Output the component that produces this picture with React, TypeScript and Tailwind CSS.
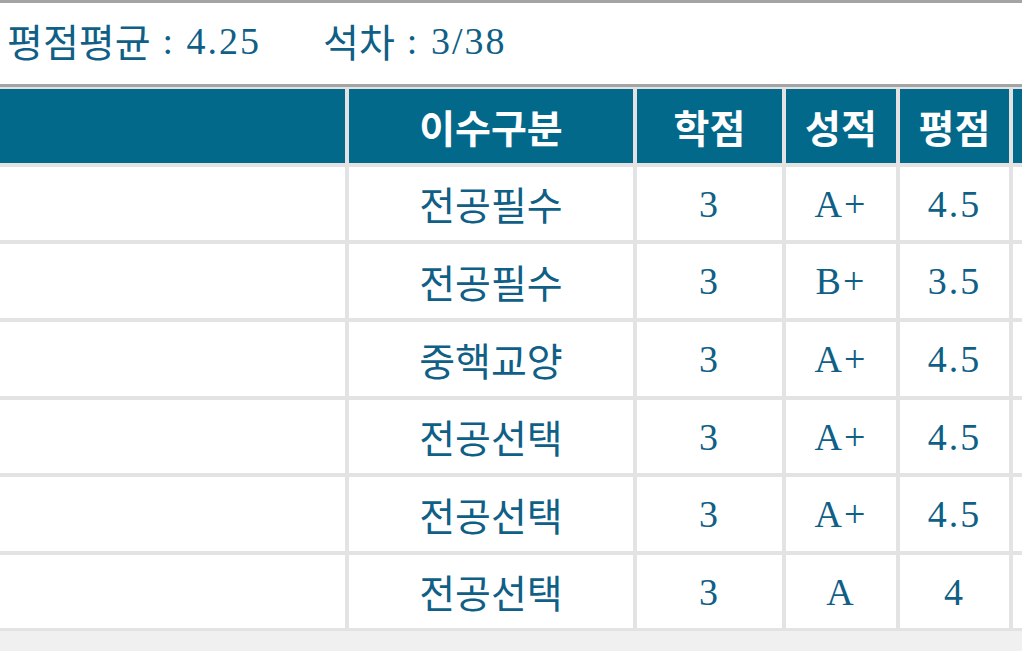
import React from "react";

const rows = [
  { type: "전공필수", credit: "3", grade: "A+", point: "4.5", h: "h-[73px]" },
  { type: "전공필수", credit: "3", grade: "B+", point: "3.5", h: "h-[74px]" },
  { type: "중핵교양", credit: "3", grade: "A+", point: "4.5", h: "h-[74px]" },
  { type: "전공선택", credit: "3", grade: "A+", point: "4.5", h: "h-[73px]" },
  { type: "전공선택", credit: "3", grade: "A+", point: "4.5", h: "h-[74px]" },
  { type: "전공선택", credit: "3", grade: "A", point: "4", h: "h-[73px]" },
];

const font = "font-['Liberation_Serif','Noto_Sans_CJK_KR',serif]";
const kr = "font-['Noto_Sans_CJK_KR',sans-serif] text-[39px]";
const num = "text-[38px] tracking-[2px]";

export default function App() {
  return (
    <div className={`w-[1022px] h-[651px] overflow-hidden bg-[#f0f0f0] ${font}`}>
      <div className="h-[87px] bg-white border-t-[3px] border-b-[3px] border-[#a4a4a4] flex items-center pl-[7px] pb-[6px] text-[#0f5f86] leading-none">
        <span className={kr}>평점평균</span>
        <span className={`${num} ml-[12px]`}>: 4.25</span>
        <span className={`${kr} ml-[62px]`}>석차</span>
        <span className={`${num} ml-[12px]`}>: 3/38</span>
      </div>
      <div className="bg-[#e3e3e3] pt-[2px] pb-[3px]">
        <div className="grid grid-cols-[345px_284px_145px_110px_109px_1fr] gap-[4px] leading-none">
          <div className="h-[74px] bg-[#03698b]" />
          {["이수구분", "학점", "성적", "평점"].map((t) => (
            <div
              key={t}
              className={`h-[74px] bg-[#03698b] flex items-center justify-center text-white font-bold ${kr}`}
            >
              {t}
            </div>
          ))}
          <div className="h-[74px] bg-[#03698b]" />
          {rows.map((r, i) => (
            <React.Fragment key={i}>
              <div className={`${r.h} bg-white`} />
              <div className={`${r.h} bg-white flex items-center justify-center text-[#0f5f86] ${kr}`}>
                {r.type}
              </div>
              <div className={`${r.h} bg-white flex items-center justify-center text-[#0f5f86] ${num}`}>
                {r.credit}
              </div>
              <div className={`${r.h} bg-white flex items-center justify-center text-[#0f5f86] ${num}`}>
                {r.grade}
              </div>
              <div className={`${r.h} bg-white flex items-center justify-center text-[#0f5f86] ${num}`}>
                {r.point}
              </div>
              <div className={`${r.h} bg-white`} />
            </React.Fragment>
          ))}
        </div>
      </div>
    </div>
  );
}
